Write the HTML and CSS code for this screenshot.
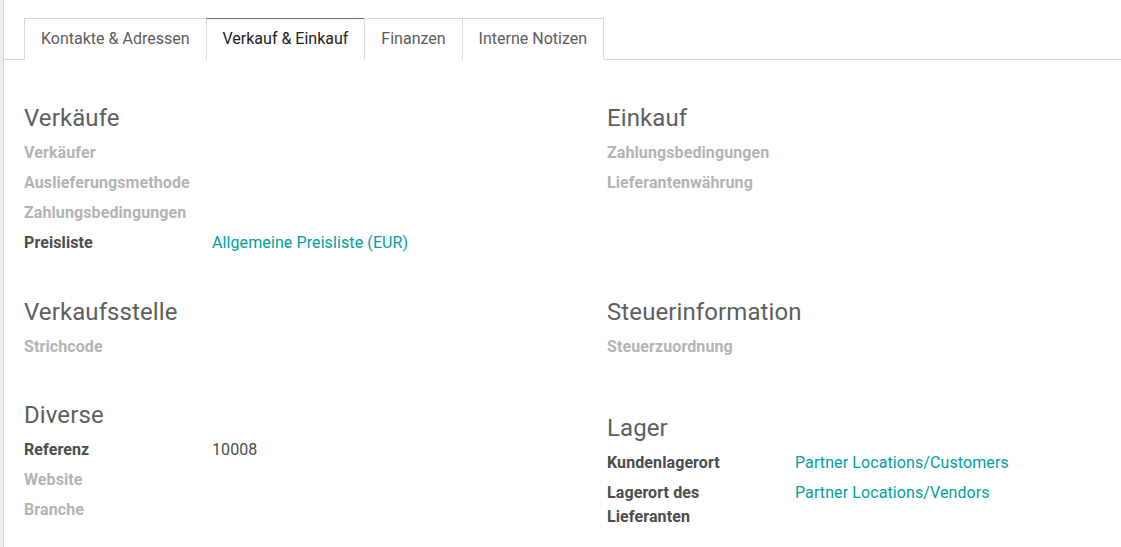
FILE: index.html
```html
<!DOCTYPE html>
<html lang="de">
<head>
<meta charset="utf-8">
<title>Verkauf &amp; Einkauf</title>
<link rel="stylesheet" href="styles.css">
</head>
<body>
<div class="sheet">
  <ul class="tabs">
    <li class="tab">Kontakte &amp; Adressen</li>
    <li class="tab active">Verkauf &amp; Einkauf</li>
    <li class="tab">Finanzen</li>
    <li class="tab last">Interne Notizen</li>
  </ul>
  <div class="content">
    <div class="grid">
      <section class="group">
        <h2 class="title">Verkäufe</h2>
        <div class="row"><div class="label muted">Verkäufer</div><div class="value"></div></div>
        <div class="row"><div class="label muted">Auslieferungsmethode</div><div class="value"></div></div>
        <div class="row"><div class="label muted">Zahlungsbedingungen</div><div class="value"></div></div>
        <div class="row"><div class="label">Preisliste</div><div class="value link">Allgemeine Preisliste (EUR)</div></div>
      </section>
      <section class="group">
        <h2 class="title">Einkauf</h2>
        <div class="row"><div class="label muted">Zahlungsbedingungen</div><div class="value"></div></div>
        <div class="row"><div class="label muted">Lieferantenwährung</div><div class="value"></div></div>
      </section>

      <section class="group spaced">
        <h2 class="title">Verkaufsstelle</h2>
        <div class="row"><div class="label muted">Strichcode</div><div class="value"></div></div>
      </section>
      <section class="group spaced">
        <h2 class="title">Steuerinformation</h2>
        <div class="row"><div class="label muted">Steuerzuordnung</div><div class="value"></div></div>
      </section>

      <section class="group spaced tight">
        <h2 class="title">Diverse</h2>
        <div class="row"><div class="label">Referenz</div><div class="value">10008</div></div>
        <div class="row"><div class="label muted">Website</div><div class="value"></div></div>
        <div class="row"><div class="label muted">Branche</div><div class="value"></div></div>
      </section>
      <section class="group spaced lower">
        <h2 class="title">Lager</h2>
        <div class="row"><div class="label">Kundenlagerort</div><div class="value link">Partner Locations/Customers</div></div>
        <div class="row"><div class="label">Lagerort des Lieferanten</div><div class="value link">Partner Locations/Vendors</div></div>
      </section>
    </div>
  </div>
</div>
</body>
</html>
```

FILE: styles.css
```css
html, body {
  margin: 0;
  padding: 0;
  height: 100%;
}

body {
  background: #ececec;
  font-family: Roboto, "Noto Sans", "Liberation Sans", sans-serif;
  font-size: 16px;
  line-height: 24px;
  letter-spacing: 0.1px;
  color: #4c4c4c;
}

.sheet {
  margin-left: 3px;
  border-left: 1px solid #d6d6d6;
  background: #ffffff;
  min-height: 100%;
  padding-top: 18px;
  box-sizing: border-box;
  overflow: hidden;
}

.tabs {
  list-style: none;
  margin: 0;
  padding: 0 0 0 20px;
  display: flex;
  border-bottom: 1px solid #d5dadf;
}

.tab {
  padding: 8px 16px;
  border-top: 1px solid #d5dadf;
  border-left: 1px solid #d5dadf;
  border-bottom: 1px solid transparent;
  margin-bottom: -1px;
  letter-spacing: 0;
  color: #5c5c5c;
  background: #ffffff;
  white-space: nowrap;
}

.tab.last {
  border-right: 1px solid #d5dadf;
}

.tab.active {
  border-top-color: #875a7b;
  border-bottom-color: #ffffff;
  color: #212121;
}

.content {
  padding: 43px 0 0 20px;
}

.grid {
  display: grid;
  grid-template-columns: 583px 583px;
  align-items: start;
}

.group {
  margin: 0;
}

.group.spaced {
  margin-top: 39px;
}

.group.tight {
  margin-top: 38px;
}

.group.lower {
  margin-top: 51px;
}

.title {
  margin: 0 0 5px 0;
  font-size: 24px;
  font-weight: 400;
  line-height: 30px;
  letter-spacing: 0.1px;
  color: #5e5e5e;
}

.row {
  display: flex;
  padding: 3px 0;
}

.label {
  flex: 0 0 188px;
  box-sizing: border-box;
  padding-right: 16px;
  font-weight: 700;
  color: #4c4c4c;
}

.label.muted {
  color: #b3b3b3;
}

.value {
  flex: 1 1 auto;
  color: #4c4c4c;
}

.value.link {
  color: #00a09d;
}
```
